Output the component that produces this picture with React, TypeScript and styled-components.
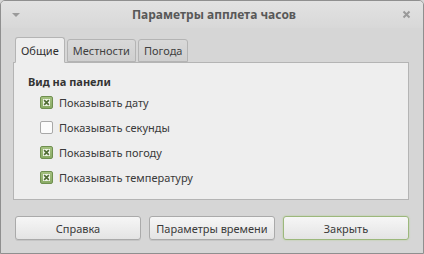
import styled, { createGlobalStyle } from 'styled-components';
import { FC } from 'react';

const GlobalStyle = createGlobalStyle`
    html, body {
        margin: 0;
        padding: 0;
        background: #d6d6d6;
    }
    * {
        box-sizing: border-box;
    }
`;

const tabs = ['Общие', 'Местности', 'Погода'];

const options = [
    { label: 'Показывать дату', checked: true },
    { label: 'Показывать секунды', checked: false },
    { label: 'Показывать погоду', checked: true },
    { label: 'Показывать температуру', checked: true },
];

const Checkbox: FC<{ checked: boolean }> = ({ checked }) => (
    <Box $checked={checked}>
        {checked && (
            <svg width='6' height='6' viewBox='0 0 6 6'>
                <path d='M1 1 L5 5 M5 1 L1 5' stroke='#4f6b34' strokeWidth='1.4' />
            </svg>
        )}
    </Box>
);

const App: FC = () => (
    <>
        <GlobalStyle />
        <Window>
            <TitleBar>
                <MenuArrow />
                <Title>Параметры апплета часов</Title>
                <CloseButton>
                    <svg width='9' height='9' viewBox='0 0 9 9'>
                        <path d='M1.5 1.5 L7.5 7.5 M7.5 1.5 L1.5 7.5' stroke='#9a9a9a' strokeWidth='2' />
                    </svg>
                </CloseButton>
            </TitleBar>
            <Body>
                <TabRow>
                    {tabs.map((tab, i) => (
                        <Tab key={tab} $active={i === 0}>
                            {tab}
                        </Tab>
                    ))}
                </TabRow>
                <Panel>
                    <Heading>Вид на панели</Heading>
                    {options.map((opt) => (
                        <OptionRow key={opt.label}>
                            <Checkbox checked={opt.checked} />
                            <span>{opt.label}</span>
                        </OptionRow>
                    ))}
                </Panel>
                <ButtonRow>
                    <Button>Справка</Button>
                    <Button>Параметры времени</Button>
                    <Button $default>Закрыть</Button>
                </ButtonRow>
            </Body>
        </Window>
    </>
);

const Window = styled.div({
    width: '424px',
    height: '254px',
    display: 'flex',
    flexDirection: 'column',
    background: '#d6d6d6',
    border: '1px solid #8f8f8f',
    borderRadius: '5px 5px 0 0',
    fontFamily: '"Noto Sans", "Open Sans", sans-serif',
    fontSize: '11px',
    color: '#3a3a3a',
    overflow: 'hidden',
});

const TitleBar = styled.div({
    height: '27px',
    flexShrink: 0,
    display: 'grid',
    gridTemplateColumns: '40px 1fr 40px',
    alignItems: 'center',
    background: 'linear-gradient(#e2e2e2, #d8d8d8)',
    padding: '0 6px 0 10px',
});

const MenuArrow = styled.div({
    width: 0,
    height: 0,
    borderLeft: '4px solid transparent',
    borderRight: '4px solid transparent',
    borderTop: '4px solid #9a9a9a',
    marginLeft: '1px',
});

const Title = styled.div({
    textAlign: 'center',
    fontWeight: 700,
    fontSize: '12px',
    color: '#585858',
    marginTop: '-1px',
});

const CloseButton = styled.div({
    display: 'flex',
    justifyContent: 'flex-end',
    alignItems: 'center',
    paddingRight: '6px',
});

const Body = styled.div({
    flex: 1,
    display: 'flex',
    flexDirection: 'column',
    padding: '8px 14px 14px 12px',
});

const TabRow = styled.div({
    display: 'flex',
    alignItems: 'flex-end',
    gap: '2px',
    height: '26px',
    paddingLeft: '2px',
    position: 'relative',
    zIndex: 1,
});

const Tab = styled.div<{ $active?: boolean }>(({ $active }) => ({
    height: $active ? '26px' : '23px',
    padding: '0 5px',
    display: 'flex',
    alignItems: 'center',
    border: '1px solid #b4b4b4',
    borderBottom: $active ? '1px solid #eeeeee' : '1px solid #b4b4b4',
    borderRadius: '3px 3px 0 0',
    background: $active ? '#eeeeee' : 'linear-gradient(#d9d9d9, #cfcfcf)',
    color: $active ? '#2e2e2e' : '#3f3f3f',
    marginBottom: $active ? '-1px' : '0',
}));

const Panel = styled.div({
    height: '138px',
    background: '#eeeeee',
    border: '1px solid #b4b4b4',
    padding: '11px 14px 0 14px',
});

const Heading = styled.div({
    fontWeight: 700,
    height: '16px',
    lineHeight: '16px',
    color: '#333',
});

const OptionRow = styled.div({
    display: 'flex',
    alignItems: 'center',
    gap: '6px',
    height: '25px',
    paddingLeft: '12px',
});

const Box = styled.div<{ $checked: boolean }>(({ $checked }) => ({
    width: '13px',
    height: '13px',
    borderRadius: '2px',
    border: $checked ? '1px solid #6f8f4f' : '1px solid #a8a8a8',
    background: $checked ? 'linear-gradient(#a3c07f, #8aab66)' : '#fbfbfb',
    display: 'flex',
    alignItems: 'center',
    justifyContent: 'center',
    '& svg': {
        background: '#eef3e6',
        width: '7px',
        height: '7px',
    },
}));

const ButtonRow = styled.div({
    display: 'grid',
    gridTemplateColumns: '1fr 1fr 1fr',
    gap: '8px',
    marginTop: '16px',
    paddingLeft: '2px',
});

const Button = styled.div<{ $default?: boolean }>(({ $default }) => ({
    height: '24px',
    display: 'flex',
    alignItems: 'center',
    justifyContent: 'center',
    border: $default ? '1px solid #9cb87c' : '1px solid #aaaaaa',
    borderRadius: '3px',
    background: 'linear-gradient(#f6f6f6, #e4e4e4)',
    boxShadow: $default ? '0 0 2px #b5cf95' : '0 1px 0 rgba(0,0,0,0.08)',
    color: '#3a3a3a',
}));

export default App;
